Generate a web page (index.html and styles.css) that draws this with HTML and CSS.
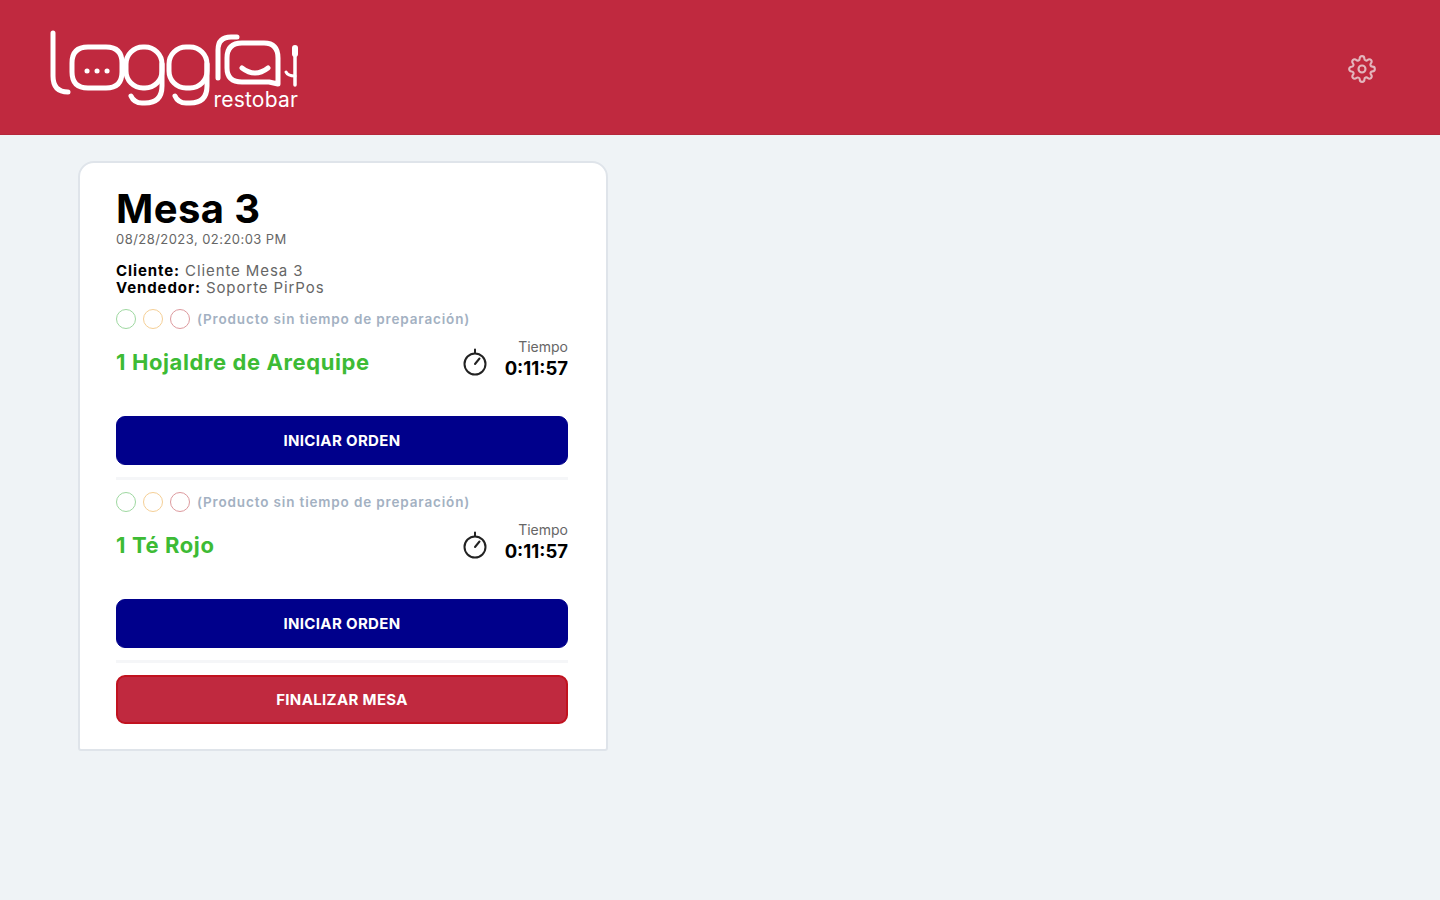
FILE: index.html
```html
<!DOCTYPE html>
<html lang="es">
<head>
    <meta charset="UTF-8">
    <meta name="viewport" content="width=device-width, initial-scale=1.0">
    <title>Loggro Restobar - Comandas</title>
    <link rel="stylesheet" href="styles.css">
</head>
<body>
    <header class="topbar">
        <a href="#" class="logo" aria-label="Loggro restobar">
            <svg class="logo-mark" width="260" height="80" viewBox="0 0 260 80" fill="none" stroke="#fff" stroke-width="5" stroke-linecap="round" stroke-linejoin="round">
                <!-- l -->
                <path d="M3 3V46Q3 62 18 62"/>
                <!-- burbuja izquierda -->
                <path d="M38 17H56Q72 17 72 33V42Q72 58 56 58H38Q22 58 22 42V33Q22 17 38 17Z"/>
                <path d="M37 41h.1M47 41h.1M57 41h.1"/>
                <!-- g g -->
                <rect x="76" y="17" width="36" height="41" rx="17"/>
                <path d="M112 34V56Q112 73 95 73H92Q84 73 81 66"/>
                <rect x="119" y="17" width="38" height="41" rx="17"/>
                <path d="M157 34V56Q157 73 140 73H136Q128 73 125 66"/>
                <!-- r -->
                <path d="M168 48V20Q168 7 181 7H187"/>
                <!-- burbuja derecha -->
                <path d="M192 13H214Q228 13 228 28V54L219 52H192Q177 52 177 38V28Q177 13 192 13Z"/>
                <path d="M192 38Q205 48 218 38"/>
                <!-- tenedor -->
                <path d="M245 20V55" stroke-width="3.5"/>
                <path d="M245 18V24" stroke-width="6"/>
                <path d="M236 42Q238 46 245 46" stroke-width="3"/>
            </svg>
            <span class="logo-sub">restobar</span>
        </a>
        <button class="settings" aria-label="Ajustes">
            <svg width="28" height="28" viewBox="0 0 24 24" fill="none" stroke="currentColor" stroke-width="1.8" stroke-linecap="round" stroke-linejoin="round">
                <circle cx="12" cy="12" r="3"/>
                <path d="M19.4 15a1.65 1.65 0 0 0 .33 1.82l.06.06a2 2 0 0 1 0 2.83 2 2 0 0 1-2.83 0l-.06-.06a1.65 1.65 0 0 0-1.82-.33 1.65 1.65 0 0 0-1 1.51V21a2 2 0 0 1-2 2 2 2 0 0 1-2-2v-.09A1.65 1.65 0 0 0 9 19.4a1.65 1.65 0 0 0-1.82.33l-.06.06a2 2 0 0 1-2.83 0 2 2 0 0 1 0-2.83l.06-.06a1.65 1.65 0 0 0 .33-1.82 1.65 1.65 0 0 0-1.51-1H3a2 2 0 0 1-2-2 2 2 0 0 1 2-2h.09A1.65 1.65 0 0 0 4.6 9a1.65 1.65 0 0 0-.33-1.82l-.06-.06a2 2 0 0 1 0-2.83 2 2 0 0 1 2.83 0l.06.06a1.65 1.65 0 0 0 1.82.33H9a1.65 1.65 0 0 0 1-1.51V3a2 2 0 0 1 2-2 2 2 0 0 1 2 2v.09a1.65 1.65 0 0 0 1 1.51 1.65 1.65 0 0 0 1.82-.33l.06-.06a2 2 0 0 1 2.83 0 2 2 0 0 1 0 2.83l-.06.06a1.65 1.65 0 0 0-.33 1.82V9a1.65 1.65 0 0 0 1.51 1H21a2 2 0 0 1 2 2 2 2 0 0 1-2 2h-.09a1.65 1.65 0 0 0-1.51 1z"/>
            </svg>
        </button>
    </header>

    <main class="board">
        <section class="order-card">
            <h1 class="table-name">Mesa 3</h1>
            <p class="order-date">08/28/2023, 02:20:03 PM</p>
            <p class="order-people"><b>Cliente:</b> Cliente Mesa 3<br><b>Vendedor:</b> Soporte PirPos</p>

            <div class="order-item">
                <div class="status-row">
                    <span class="dot dot-green"></span>
                    <span class="dot dot-yellow"></span>
                    <span class="dot dot-red"></span>
                    <span class="status-note">(Producto sin tiempo de preparación)</span>
                </div>
                <div class="item-row">
                    <span class="item-name">1 Hojaldre de Arequipe</span>
                    <svg class="stopwatch" width="26" height="32" viewBox="0 0 26 32" fill="none" stroke="#222" stroke-width="2" stroke-linecap="round">
                        <circle cx="13" cy="18" r="10.5"/>
                        <path d="M13 3.5V7M13 18L17.5 12.5"/>
                    </svg>
                    <div class="timer">
                        <span class="timer-label">Tiempo</span>
                        <span class="timer-value">0:11:57</span>
                    </div>
                </div>
                <button class="btn btn-start">INICIAR ORDEN</button>
            </div>

            <div class="order-item">
                <div class="status-row">
                    <span class="dot dot-green"></span>
                    <span class="dot dot-yellow"></span>
                    <span class="dot dot-red"></span>
                    <span class="status-note">(Producto sin tiempo de preparación)</span>
                </div>
                <div class="item-row">
                    <span class="item-name">1 Té Rojo</span>
                    <svg class="stopwatch" width="26" height="32" viewBox="0 0 26 32" fill="none" stroke="#222" stroke-width="2" stroke-linecap="round">
                        <circle cx="13" cy="18" r="10.5"/>
                        <path d="M13 3.5V7M13 18L17.5 12.5"/>
                    </svg>
                    <div class="timer">
                        <span class="timer-label">Tiempo</span>
                        <span class="timer-value">0:11:57</span>
                    </div>
                </div>
                <button class="btn btn-start">INICIAR ORDEN</button>
            </div>

            <button class="btn btn-finish">FINALIZAR MESA</button>
        </section>
    </main>
</body>
</html>
```

FILE: styles.css
```css
body {
    font-family: Inter, 'Liberation Sans', sans-serif;
    margin: 0;
    background-color: #eff3f6;
    color: #000;
}

.topbar {
    height: 135px;
    box-sizing: border-box;
    padding: 0 64px 0 50px;
    display: flex;
    justify-content: space-between;
    align-items: center;
    background-color: #c0293f;
    border-bottom: 1px solid #b5273b;
}

.logo {
    display: block;
    width: 260px;
    height: 80px;
    position: relative;
    text-decoration: none;
    margin-top: 5px;
}

.logo-mark {
    display: block;
    overflow: visible;
}

.logo-sub {
    position: absolute;
    right: 12px;
    bottom: 0;
    color: #fff;
    font-size: 21px;
    line-height: 20px;
    font-weight: 400;
    letter-spacing: 0.2px;
}

.settings {
    padding: 0;
    border: none;
    background: none;
    color: #e3b6bd;
    display: flex;
    margin-top: 3px;
}

.board {
    padding: 26px 78px;
}

.order-card {
    width: 530px;
    box-sizing: border-box;
    padding: 25px 38px 25px 36px;
    background-color: white;
    border: 2px solid #dfe4ea;
    border-radius: 16px 16px 3px 3px;
}

.table-name {
    margin: 0;
    font-size: 40px;
    line-height: 42px;
    font-weight: 700;
    letter-spacing: 0.4px;
}

.order-date {
    margin: 0;
    font-size: 13px;
    line-height: 18px;
    letter-spacing: 0.45px;
    color: #666;
}

.order-people {
    margin: 14px 0 1px;
    font-size: 15px;
    line-height: 17px;
    letter-spacing: 0.9px;
    color: #666;
}

.order-people b {
    color: #000;
}

.order-item {
    height: 183px;
    box-sizing: border-box;
    padding-top: 11px;
    position: relative;
}

.order-item::after {
    content: "";
    position: absolute;
    left: 0;
    right: 0;
    bottom: 0;
    height: 3px;
    background-color: #f5f6f8;
}

.status-row {
    display: flex;
    align-items: center;
    height: 22px;
    gap: 7px;
}

.dot {
    width: 20px;
    height: 20px;
    box-sizing: border-box;
    border-radius: 50%;
    border: 1.8px solid;
    background-color: #fff;
}

.dot-green {
    border-color: #9ed8a0;
}

.dot-yellow {
    border-color: #f5cf96;
}

.dot-red {
    border-color: #dd9a9e;
}

.status-note {
    font-size: 13.5px;
    font-weight: 600;
    letter-spacing: 0.85px;
    color: #a3b1c2;
}

.item-row {
    display: flex;
    align-items: center;
    height: 50px;
    margin-top: 7px;
}

.item-name {
    flex: 1;
    font-size: 22px;
    font-weight: 700;
    letter-spacing: 0.6px;
    color: #3dbb35;
}

.stopwatch {
    margin: 0 17px 0 1px;
}

.timer {
    display: flex;
    flex-direction: column;
    align-items: flex-end;
    margin-top: -5px;
}

.timer-label {
    font-size: 14px;
    line-height: 17px;
    color: #666;
}

.timer-value {
    font-size: 18.5px;
    line-height: 27px;
    font-weight: 700;
}

.btn {
    display: block;
    width: 100%;
    height: 49px;
    border-radius: 9px;
    color: white;
    font-family: inherit;
    font-size: 15px;
    font-weight: 700;
    letter-spacing: 0.35px;
    cursor: pointer;
}

.btn-start {
    margin-top: 29px;
    background-color: #00008b;
    border: 1px solid #00008b;
}

.btn-finish {
    margin-top: 12px;
    background-color: #c0293f;
    border: 2px solid #c1121f;
}
```
